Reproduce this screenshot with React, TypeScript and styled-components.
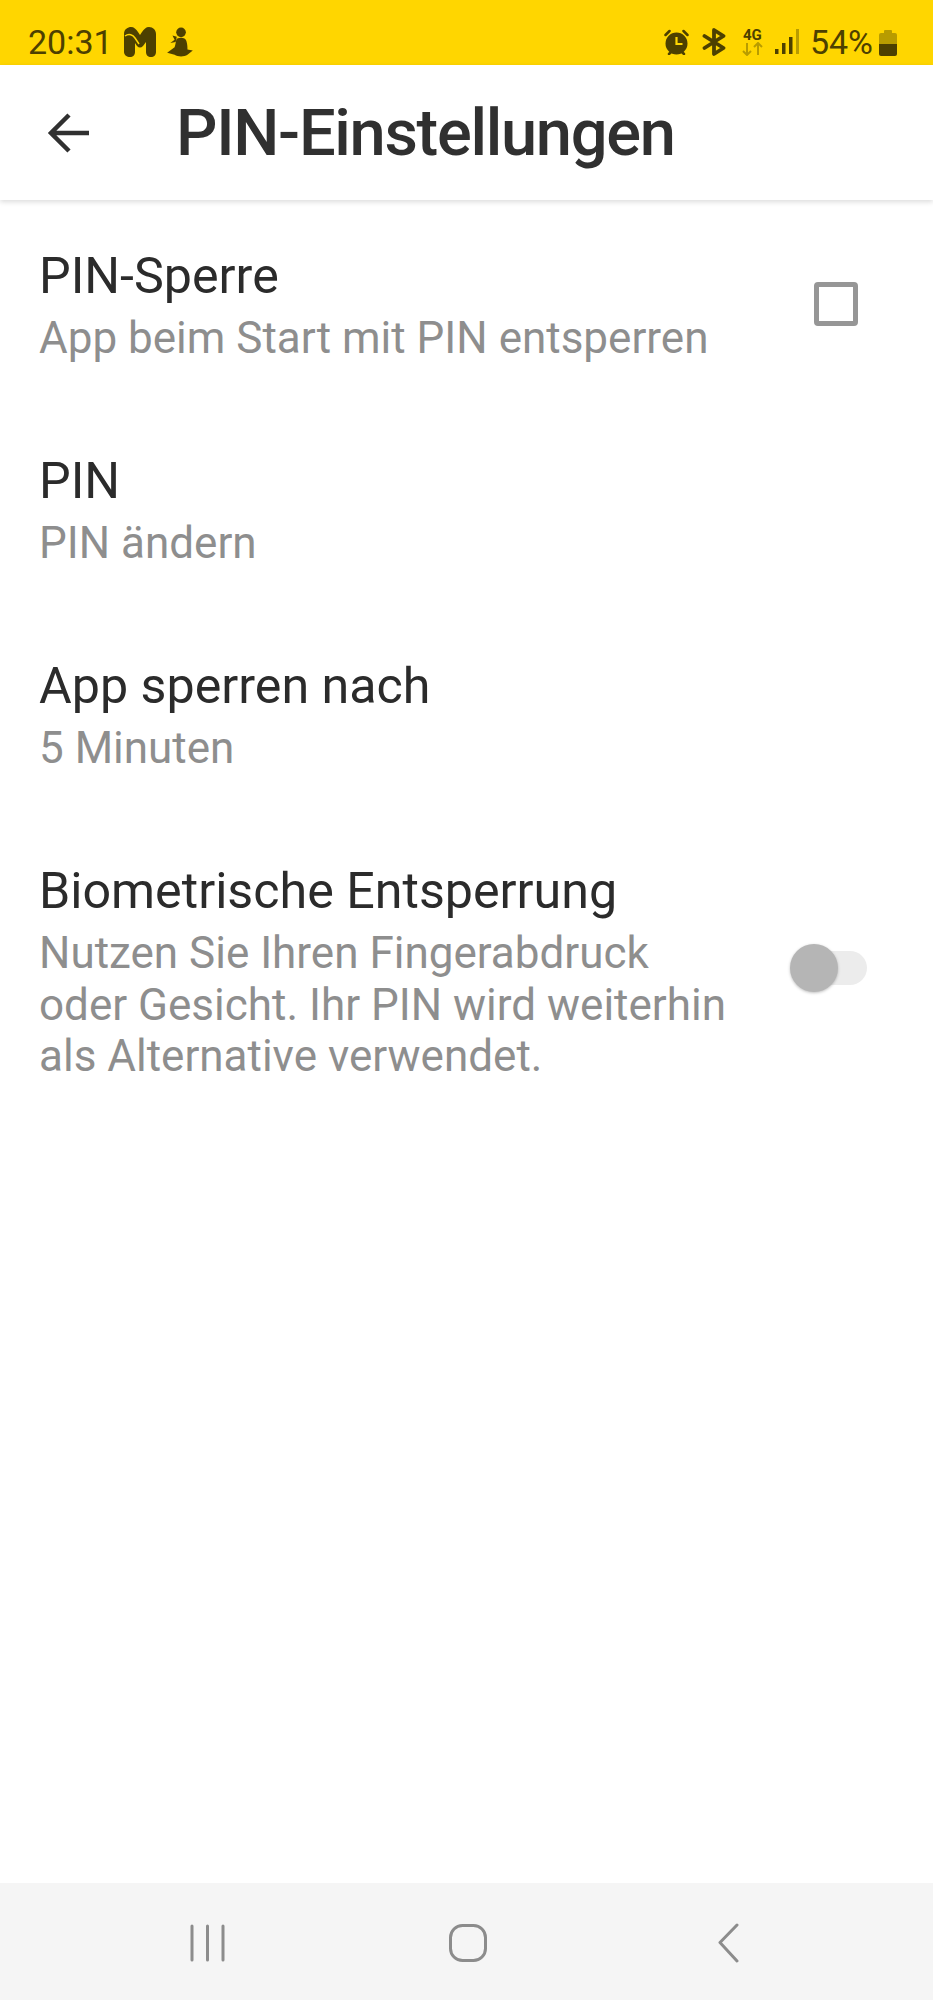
import React from 'react';
import styled, { createGlobalStyle } from 'styled-components';

const GlobalStyle = createGlobalStyle`
  html, body {
    margin: 0;
    padding: 0;
    background: #ffffff;
  }
  body {
    font-family: Roboto, "Liberation Sans", sans-serif;
  }
`;

const Screen = styled.div`
  width: 933px;
  height: 2000px;
  display: flex;
  flex-direction: column;
  overflow: hidden;
  background: #ffffff;
`;

const StatusBar = styled.div`
  height: 65px;
  flex: none;
  box-sizing: border-box;
  padding: 0 36px 0 28px;
  background: #ffd600;
  color: #4d4000;
  display: flex;
  align-items: center;
  justify-content: space-between;
`;

const StatusGroup = styled.div`
  display: flex;
  align-items: center;
  height: 100%;
  padding-top: 19px;
  box-sizing: border-box;
`;

const StatusText = styled.span<{ $right?: boolean }>`
  font-size: 34px;
  line-height: 40px;
  margin: ${props => (props.$right ? '0 6px 0 11px' : '0 11px 0 0')};
`;

const StatusIcon = styled.svg<{ $gap?: number }>`
  display: block;
  flex: none;
  margin-right: ${props => props.$gap ?? 0}px;
`;

const NetworkBadge = styled.div`
  width: 23px;
  margin-right: 11px;
  flex: none;
  display: flex;
  flex-direction: column;
  align-items: center;
`;

const NetworkLabel = styled.span`
  font-size: 15px;
  font-weight: 700;
  line-height: 14px;
`;

const Toolbar = styled.header`
  height: 135px;
  flex: none;
  display: flex;
  align-items: center;
  padding-left: 47px;
  background: #ffffff;
  box-shadow: 0 2px 5px rgba(0, 0, 0, 0.14);
  position: relative;
`;

const BackArrow = styled.svg`
  display: block;
  flex: none;
  margin-right: 86px;
`;

const Title = styled.h1`
  margin: 0;
  font-size: 65px;
  font-weight: 500;
  line-height: 72px;
  letter-spacing: -1.3px;
  color: #303030;
`;

const List = styled.main`
  flex: 1;
  padding-top: 5px;
`;

const Row = styled.div`
  min-height: 205px;
  box-sizing: border-box;
  padding: 33px 40px 0 39px;
  display: flex;
  align-items: flex-start;
  justify-content: space-between;
`;

const RowText = styled.div`
  width: 700px;
`;

const RowTitle = styled.div`
  font-size: 50.2px;
  line-height: 75px;
  color: #2b2b2b;
`;

const RowSub = styled.div`
  font-size: 44px;
  line-height: 51.5px;
  color: #8e8e8e;
`;

const CheckBox = styled.div`
  width: 44px;
  height: 44px;
  box-sizing: border-box;
  border: 5px solid #969696;
  border-radius: 4px;
  margin: 44px 35px 0 0;
  flex: none;
`;

const SwitchTrack = styled.div`
  width: 70px;
  height: 34px;
  border-radius: 17px;
  background: #ececec;
  margin: 98px 26px 0 0;
  flex: none;
  position: relative;
`;

const SwitchThumb = styled.div`
  position: absolute;
  left: -7px;
  top: -7px;
  width: 48px;
  height: 48px;
  border-radius: 50%;
  background: #b5b5b5;
  box-shadow: 0 1px 3px rgba(0, 0, 0, 0.25);
`;

const NavBar = styled.nav`
  height: 117px;
  flex: none;
  background: #f5f5f5;
  display: flex;
  align-items: center;
  padding: 3px 0 0 190px;
  box-sizing: border-box;
`;

const NavIcon = styled.svg<{ $gap: number }>`
  display: block;
  flex: none;
  margin-right: ${props => props.$gap}px;
`;

const rows = [
  { title: 'PIN-Sperre', sub: 'App beim Start mit PIN entsperren', control: 'check' },
  { title: 'PIN', sub: 'PIN ändern' },
  { title: 'App sperren nach', sub: '5 Minuten' },
  {
    title: 'Biometrische Entsperrung',
    sub: 'Nutzen Sie Ihren Fingerabdruck oder Gesicht. Ihr PIN wird weiterhin als Alternative verwendet.',
    control: 'switch',
  },
];

function App() {
  return (
    <Screen>
      <GlobalStyle />
      <StatusBar>
        <StatusGroup>
          <StatusText>20:31</StatusText>
          <StatusIcon $gap={11} width="32" height="30" viewBox="0 0 32 30">
            <path fill="currentColor" d="M0 7C0 2 4 0 7 0c3 0 5 2 7 5l2 3 2-3c2-3 4-5 7-5 4 0 7 3 7 7v18c0 3-2 5-5 5s-5-2-5-5V15l-3 4c-2 2-4 2-6 0l-2-3v9c0 3-2 5-5 5s-6-2-6-5z" />
            <path fill="none" stroke="#ffd600" strokeWidth="1.5" d="M1 9c4-3 8-1 10 2l4 6" />
          </StatusIcon>
          <StatusIcon width="27" height="30" viewBox="0 0 25 28">
            <circle cx="13" cy="5" r="4.5" fill="currentColor" />
            <path fill="currentColor" d="M9 11c4-2 8-1 9 2 1 3 1 6 1 8l5 1-5 4c-3 2-9 2-12 0l-7-2 7-5c1-3 1-6 2-8z" />
            <path fill="currentColor" d="M5 8l4 1-1 5-5 1 4-3z" />
          </StatusIcon>
        </StatusGroup>
        <StatusGroup>
          <StatusIcon $gap={13} width="25" height="26" viewBox="0 0 25 26">
            <path fill="currentColor" d="M12.5 3.5a11 11 0 1 1 0 22 11 11 0 0 1 0-22z" />
            <path fill="none" stroke="currentColor" strokeWidth="2.5" strokeLinecap="round" d="M1.5 6l4-4M23.500 6l-4-4M5 25l2-2M20 25l-2-2" />
            <path fill="none" stroke="#ffd600" strokeWidth="2.2" d="M12.500 8v7h6" />
          </StatusIcon>
          <StatusIcon $gap={15} width="24" height="28" viewBox="0 0 24 28">
            <path fill="none" stroke="currentColor" strokeWidth="3.800" strokeLinejoin="round" strokeLinecap="round" d="M2.500 8l19 12-9.500 6V2l9.500 6-19 12" />
          </StatusIcon>
          <NetworkBadge>
            <NetworkLabel>4G</NetworkLabel>
            <svg width="23" height="14" viewBox="0 0 23 14">
              <path fill="none" stroke="#b89c00" strokeWidth="2" d="M6 1v12M2 9l4 4 4-4M17 13V1M13 5l4-4 4 4" />
            </svg>
          </NetworkBadge>
          <StatusIcon width="24" height="26" viewBox="0 0 24 26">
            <rect x="0" y="20" width="3.500" height="5" fill="currentColor" />
            <rect x="7" y="14" width="3.500" height="11" fill="currentColor" />
            <rect x="14" y="8" width="3.500" height="17" fill="currentColor" />
            <rect x="21" y="0" width="3" height="25" fill="#b89c00" />
          </StatusIcon>
          <StatusText $right>54%</StatusText>
          <StatusIcon width="18" height="27" viewBox="0 0 18 27">
            <path fill="#b89c00" d="M5 2a1 1 0 0 1 1-1h6a1 1 0 0 1 1 1v2h3a2 2 0 0 1 2 2v9H0V6a2 2 0 0 1 2-2h3z" />
            <path fill="currentColor" d="M0 15h18v10a2 2 0 0 1-2 2H2a2 2 0 0 1-2-2z" />
          </StatusIcon>
        </StatusGroup>
      </StatusBar>

      <Toolbar>
        <BackArrow width="43" height="40" viewBox="0 0 43 40">
          <path fill="none" stroke="#303030" strokeWidth="4.500" d="M22 2L4 20l18 18M4 20h38" />
        </BackArrow>
        <Title>PIN-Einstellungen</Title>
      </Toolbar>

      <List>
        {rows.map(row => (
          <Row key={row.title}>
            <RowText>
              <RowTitle>{row.title}</RowTitle>
              <RowSub>{row.sub}</RowSub>
            </RowText>
            {row.control === 'check' && <CheckBox />}
            {row.control === 'switch' && (
              <SwitchTrack>
                <SwitchThumb />
              </SwitchTrack>
            )}
          </Row>
        ))}
      </List>

      <NavBar>
        <NavIcon $gap={224} width="35" height="38" viewBox="0 0 35 38">
          <path fill="none" stroke="#8c8c8c" strokeWidth="3" strokeLinecap="round" d="M2 2v34M17.500 2v34M33 2v34" />
        </NavIcon>
        <NavIcon $gap={230} width="38" height="38" viewBox="0 0 38 38">
          <rect x="1.500" y="1.500" width="35" height="35" rx="12" fill="none" stroke="#8c8c8c" strokeWidth="3" />
        </NavIcon>
        <NavIcon $gap={0} width="22" height="40" viewBox="0 0 22 40">
          <path fill="none" stroke="#8c8c8c" strokeWidth="3" strokeLinecap="round" strokeLinejoin="round" d="M20 2L3 19.500 20 38" />
        </NavIcon>
      </NavBar>
    </Screen>
  );
}

export default App;
